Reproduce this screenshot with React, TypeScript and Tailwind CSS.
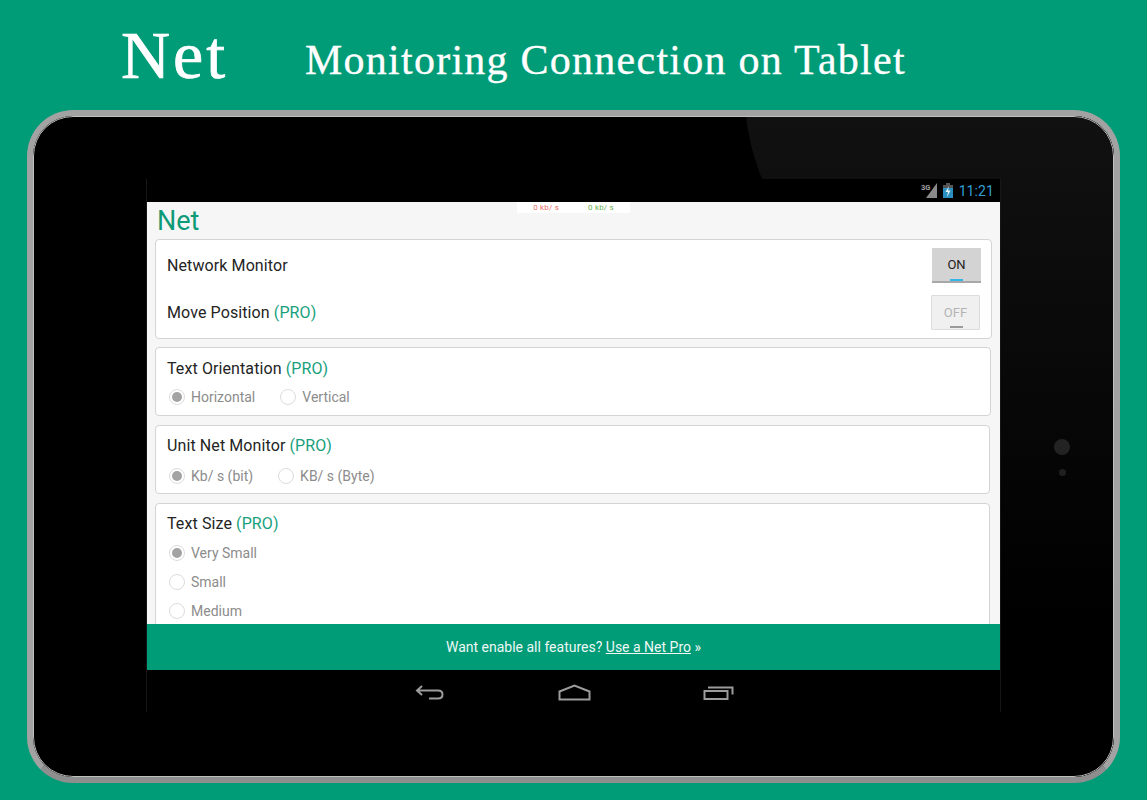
import React from 'react';

const GREEN = '#009b77';

const Pro = () => <span className="text-[#189f7d]"> (PRO)</span>;

const Radio = ({ label, checked }: { label: string; checked?: boolean }) => (
  <div className="flex items-center gap-[6px]">
    <span className="flex h-[16px] w-[16px] items-center justify-center rounded-full border border-[#dcdcdc] bg-white">
      {checked && <span className="h-[10px] w-[10px] rounded-full bg-[#a3a3a3]" />}
    </span>
    <span className="text-[14px] leading-[20px] text-[#8c8c8c]">{label}</span>
  </div>
);

const Toggle = ({ on }: { on?: boolean }) => (
  <div
    className={
      on
        ? 'relative flex h-[35px] w-[49px] items-center justify-center border-b-2 border-[#a8a8a8] bg-[#d3d3d3] text-[13px] text-[#222]'
        : 'relative flex h-[35px] w-[49px] items-center justify-center rounded-[1px] border border-[#dcdcdc] bg-[#f0f0f0] text-[13px] text-[#b4b4b4]'
    }
  >
    {on ? 'ON' : 'OFF'}
    <span className={on ? 'absolute bottom-0 left-[18px] h-[2px] w-[13px] bg-[#33b5e5]' : 'absolute bottom-[1px] left-[18px] h-[2px] w-[13px] bg-[#9a9a9a]'} />
  </div>
);

const Card = ({ children, className }: { children: React.ReactNode; className: string }) => (
  <div className={`rounded-[4px] border border-[#d4d4d4] bg-white ${className}`}>{children}</div>
);

const Heading = ({ children }: { children: React.ReactNode }) => (
  <div className="text-[16px] leading-[22px] tracking-[0.1px] text-[#242424]">{children}</div>
);

const StatusBar = () => (
  <div className="flex h-[23px] items-center justify-end bg-black pr-[6px]">
    <svg width="17" height="15" viewBox="0 0 17 15" className="mr-[5px]">
      <path d="M16 0v15H5z" fill="#8a8a8a" />
      <text x="0" y="7" fontSize="7.500" fontWeight="700" fill="#a0a0a0" fontFamily="Roboto, sans-serif">3G</text>
    </svg>
    <svg width="10" height="15" viewBox="0 0 10 15" className="mr-[6px]">
      <rect x="3" y="0" width="4" height="2" fill="#555" />
      <rect x="0" y="2" width="10" height="3" fill="#555" />
      <rect x="0" y="5" width="10" height="10" fill="#2a8fc0" />
      <path d="M6 3 2.500 9H5l-1 5 3.500-6.500H5z" fill="#e8f4fa" />
    </svg>
    <span className="text-[14px] leading-none tracking-[0.1px] text-[#2f9fd3]">11:21</span>
  </div>
);

const NavBar = () => (
  <div className="flex h-[42px] items-start bg-black pt-[14px]">
    <svg width="30" height="18" viewBox="0 0 30 18" fill="none" stroke="#9c9c9c" strokeWidth="2" className="ml-[268px]">
      <path d="M7 2 2 6.500l5 4.500M2 6.500h21c3.500 0 4.500 2 4.500 4s-1 4-4.500 4h-9" />
    </svg>
    <svg width="33" height="18" viewBox="0 0 33 18" fill="none" stroke="#9c9c9c" strokeWidth="2" className="ml-[113px]">
      <path d="M1.500 15.500V7.500L16.500 1.500l15 6v8z" />
    </svg>
    <svg width="31" height="18" viewBox="0 0 31 18" fill="none" stroke="#9c9c9c" strokeWidth="2" className="ml-[112px]">
      <path d="M1.500 7h23v8h-23zM5 3.500h24.500v7" />
    </svg>
  </div>
);

export default function App() {
  return (
    <div className="h-[800px] w-[1147px] overflow-hidden bg-[#009b77] font-['Roboto',sans-serif]">
      <div className="flex h-[110px] items-start pl-[121px] font-['Liberation_Serif',serif] text-white">
        <div className="mt-[15px] w-[184px] text-[68px] leading-[80px] tracking-[3px] [-webkit-text-stroke:0.7px_white]">Net</div>
        <div className="mt-[35px] text-[42px] leading-[50px] tracking-[1.250px] [-webkit-text-stroke:0.3px_white]">Monitoring Connection on Tablet</div>
      </div>

      <div className="relative ml-[27px] h-[673px] w-[1093px] overflow-hidden rounded-[46px] border-[6px] border-[#a2a2a2] border-b-[#8e8e8e] bg-black pl-[114px] pt-[63px]">
        {/* glass reflection */}
        <svg className="absolute left-0 top-0" width="1081" height="661" viewBox="0 0 1081 661">
          <defs>
            <linearGradient id="glare" x1="0" y1="0" x2="0" y2="1">
              <stop offset="0" stopColor="#111111" />
              <stop offset="0.45" stopColor="#070707" />
              <stop offset="0.75" stopColor="#000000" />
            </linearGradient>
          </defs>
          <path d="M713 0C716 25 722 45 729 63H967V661H1081V0z" fill="url(#glare)" />
        </svg>

        <div className="relative flex h-[533px] w-[853px] flex-col bg-[#f6f6f6] shadow-[-1px_0_0_#161616,1px_0_0_#161616]">
          <StatusBar />
          <div className="relative flex min-h-0 flex-1 flex-col overflow-hidden px-[8px]">
            <div className="absolute left-[370px] top-0 flex h-[11px] w-[113px] justify-center gap-[29px] rounded-b-[2px] bg-white text-[8px] leading-[12px] tracking-[0.2px]">
              <span className="text-[#f06a6a]">0 kb/ s</span>
              <span className="text-[#6cb04e]">0 kb/ s</span>
            </div>
            <div className="h-[37px] pl-[2px] text-[27px] leading-[39px] text-[#0d9a76]">Net</div>

            <Card className="h-[100px] w-[837px] shrink-0 pl-[11px] pr-[10px] pt-[8px]">
              <div className="flex h-[35px] items-center justify-between">
                <Heading>Network Monitor</Heading>
                <Toggle on />
              </div>
              <div className="mt-[12px] flex h-[35px] items-center justify-between pr-[1px]">
                <Heading>Move Position<Pro /></Heading>
                <Toggle />
              </div>
            </Card>

            <Card className="mt-[8px] h-[69px] w-[836px] shrink-0 px-[11px] pt-[10px]">
              <Heading>Text Orientation<Pro /></Heading>
              <div className="mt-[7px] flex gap-[25px] pl-[2px]">
                <Radio label="Horizontal" checked />
                <Radio label="Vertical" />
              </div>
            </Card>

            <Card className="mt-[9px] h-[69px] w-[835px] shrink-0 px-[11px] pt-[9px]">
              <Heading>Unit Net Monitor<Pro /></Heading>
              <div className="mt-[9px] flex gap-[25px] pl-[2px]">
                <Radio label="Kb/ s (bit)" checked />
                <Radio label="KB/ s (Byte)" />
              </div>
            </Card>

            <Card className="mt-[9px] h-[160px] w-[835px] shrink-0 px-[11px] pt-[9px]">
              <Heading>Text Size<Pro /></Heading>
              <div className="mt-[8px] flex flex-col gap-[9px] pl-[2px]">
                <Radio label="Very Small" checked />
                <Radio label="Small" />
                <Radio label="Medium" />
              </div>
            </Card>

            <div
              className="absolute bottom-0 left-0 flex h-[46px] w-full items-center justify-center text-[14px] text-[#eef8f5]"
              style={{ backgroundColor: GREEN }}
            >
              <span>
                Want enable all features? <span className="underline">Use a Net Pro</span> »
              </span>
            </div>
          </div>
          <NavBar />
        </div>

        <div className="absolute left-[1021px] top-[323px] h-[16px] w-[16px] rounded-full bg-[#232323]" />
        <div className="absolute left-[1026px] top-[353px] h-[7px] w-[7px] rounded-full bg-[#202020]" />
        {/* lighter inner edge of the bezel */}
        <div className="pointer-events-none absolute inset-0 rounded-[40px] border border-[#c0c0c0]" />
      </div>
    </div>
  );
}
